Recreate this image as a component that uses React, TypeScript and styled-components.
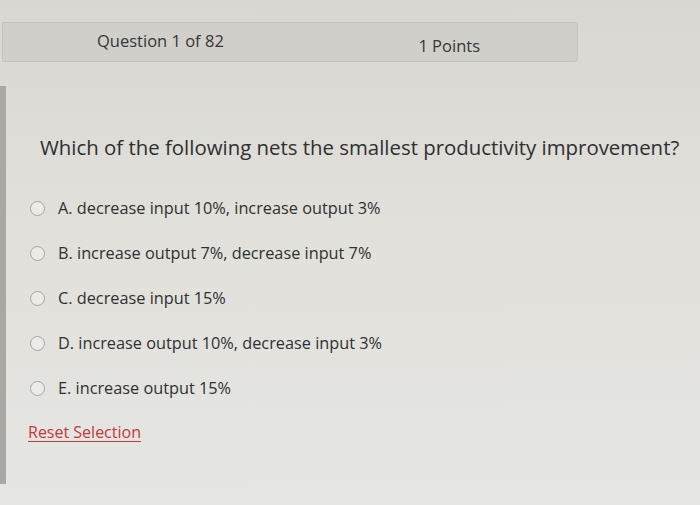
import styled, { createGlobalStyle } from 'styled-components'

const GlobalStyle = createGlobalStyle`
  html, body {
    margin: 0;
    padding: 0;
    width: 700px;
    height: 505px;
    overflow: hidden;
    font-family: "Open Sans", "Liberation Sans", sans-serif;
    color: #333;
    background: linear-gradient(180deg, #d8d7d1 0%, #e1e0db 45%, #e6e6e2 100%);
  }
`

const Page = styled.div`
  width: 700px;
  height: 505px;
  display: flex;
  flex-direction: column;
`

const HeaderBar = styled.div`
  margin: 22px 0 0 2px;
  width: 576px;
  height: 40px;
  box-sizing: border-box;
  display: flex;
  align-items: center;
  background: #d0cfca;
  border: 1px solid #c4c3be;
  border-radius: 0 4px 4px 0;
  font-size: 16.5px;
  color: #363636;
`

const QuestionNo = styled.span`
  margin-left: 94px;
  margin-top: -4px;
`

const Points = styled.span`
  margin-left: auto;
  margin-right: 97px;
  margin-top: 7px;
`

const Panel = styled.div`
  margin-top: 24px;
  height: 398px;
  display: flex;
`

const SideRule = styled.div`
  width: 6px;
  background: #a9a8a3;
`

const Body = styled.div`
  flex: 1;
  padding: 47px 0 0 34px;
`

const Question = styled.div`
  font-size: 20.4px;
  color: #2f2f2f;
  margin-bottom: 35px;
`

const Options = styled.div`
  display: flex;
  flex-direction: column;
  gap: 21px;
  margin-left: -10px;
`

const Option = styled.label`
  display: flex;
  align-items: center;
  gap: 13px;
  font-size: 16.3px;
  line-height: 24px;
  color: #303030;
`

const Radio = styled.span`
  width: 13px;
  height: 13px;
  border-radius: 50%;
  border: 1.5px solid #a4a4a0;
  background: #ecebe7;
  flex: none;
`

const Reset = styled.a`
  display: inline-block;
  margin: 21px 0 0 -12px;
  font-size: 16px;
  color: #c0393e;
  text-decoration: underline;
  text-decoration-thickness: 1px;
  text-underline-offset: 3px;
`

const options = [
  'A. decrease input 10%, increase output 3%',
  'B. increase output 7%, decrease input 7%',
  'C. decrease input 15%',
  'D. increase output 10%, decrease input 3%',
  'E. increase output 15%',
]

const App = () => {
  return (
    <Page>
      <GlobalStyle />
      <HeaderBar>
        <QuestionNo>Question 1 of 82</QuestionNo>
        <Points>1 Points</Points>
      </HeaderBar>
      <Panel>
        <SideRule />
        <Body>
          <Question>Which of the following nets the smallest productivity improvement?</Question>
          <Options>
            {options.map((o) => (
              <Option key={o}>
                <Radio />
                {o}
              </Option>
            ))}
          </Options>
          <Reset>Reset Selection</Reset>
        </Body>
      </Panel>
    </Page>
  )
}

export default App
